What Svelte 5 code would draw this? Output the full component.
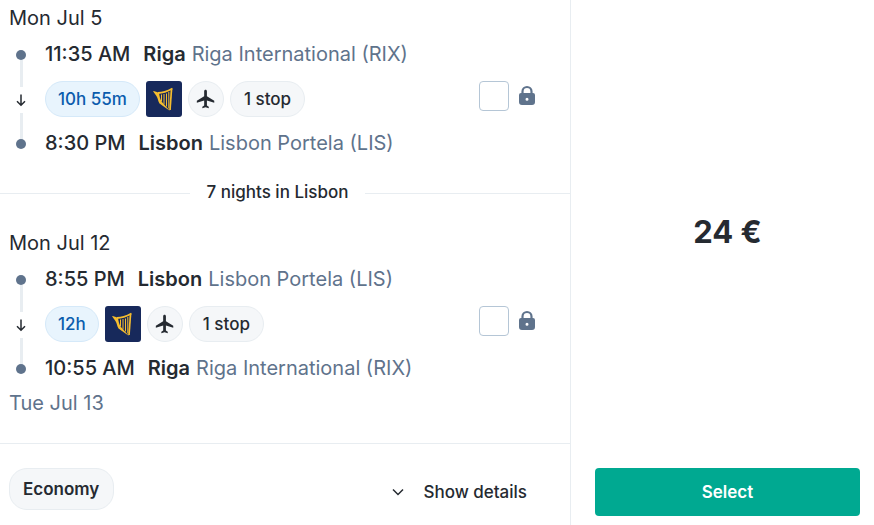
<script>
  const legs = [
    {
      date: "Mon Jul 5",
      dep: { time: "11:35 AM", city: "Riga", airport: "Riga International (RIX)" },
      dur: "10h 55m",
      arr: { time: "8:30 PM", city: "Lisbon", airport: "Lisbon Portela (LIS)" },
      endDate: null
    },
    {
      date: "Mon Jul 12",
      dep: { time: "8:55 PM", city: "Lisbon", airport: "Lisbon Portela (LIS)" },
      dur: "12h",
      arr: { time: "10:55 AM", city: "Riga", airport: "Riga International (RIX)" },
      endDate: "Tue Jul 13"
    }
  ];
</script>

{#snippet stop(s)}
  <div class="stop">
    <span class="time">{s.time}</span>
    <span class="city">{s.city}</span>
    <span class="airport">{s.airport}</span>
  </div>
{/snippet}

<div class="card">
  <div class="left">
    <div class="legs">
      {#each legs as leg, i}
        {#if i > 0}
          <div class="nights"><span>7 nights in Lisbon</span></div>
        {/if}
        <section class="leg">
          <div class="date">{leg.date}</div>
          <div class="route">
            <div class="rail">
              <i class="dot"></i>
              <i class="line"></i>
              <svg class="arrow" viewBox="0 0 12 14" width="12" height="14">
                <path d="M6 1.500v10.500M2 8.200 6 12.200l4-4" fill="none" stroke="#252a31" stroke-width="1.500" />
              </svg>
              <i class="line"></i>
              <i class="dot"></i>
            </div>
            <div class="body">
              {@render stop(leg.dep)}
              <div class="meta">
                <div class="badges">
                  <span class="pill blue">{leg.dur}</span>
                  <span class="logo">
                    <svg viewBox="0 0 36 36" width="36" height="36">
                      <path fill="#f5bd2e" d="M7 10C9 10 11 11 13 12C13.500 15 14 18 15.500 20.500L24 30L13.500 22.500C12 20 12 18 11 16C10 14 8 12 7 10z" />
                      <g fill="none" stroke="#f5bd2e">
                        <path d="M12 12C17 12 22 10 26.500 7.500" stroke-width="2" />
                        <path d="M25.500 8.500 24 29" stroke-width="1.700" />
                        <path d="M15.500 13.500V20.500M18 13V23.500M20.500 12.500V25.500M22.800 11V27.500" stroke-width="1" />
                      </g>
                    </svg>
                  </span>
                  <span class="pill round">
                    <svg viewBox="0 0 24 24" width="22" height="22">
                      <path fill="#252a31" d="M21 16v-2l-8-5V3.500c0-.83-.67-1.500-1.500-1.500S10 2.670 10 3.500V9l-8 5v2l8-2.500V19l-2 1.500V22l3.500-1 3.500 1v-1.500L13 19v-5.500l8 2.500z" />
                    </svg>
                  </span>
                  <span class="pill">1 stop</span>
                </div>
                <div class="fare">
                  <span class="check"></span>
                  <svg class="lock" viewBox="0 0 18 20" width="18" height="20">
                    <path d="M4.500 9V6.500a4.500 4.500 0 0 1 9 0V9" fill="none" stroke="#5f738c" stroke-width="2.200" />
                    <path fill="#5f738c" fill-rule="evenodd" d="M3 8h12a2 2 0 0 1 2 2v7a3 3 0 0 1-3 3H4a3 3 0 0 1-3-3v-7a2 2 0 0 1 2-2zm6 4.700a1.500 1.500 0 1 0 0 3 1.500 1.500 0 0 0 0-3z" />
                  </svg>
                </div>
              </div>
              {@render stop(leg.arr)}
            </div>
          </div>
          {#if leg.endDate}
            <div class="date end">{leg.endDate}</div>
          {/if}
        </section>
      {/each}
    </div>
    <footer class="foot">
      <span class="cabin">Economy</span>
      <button class="details">
        <svg viewBox="0 0 12 8" width="12" height="8">
          <path d="M1 1.500 6 6.500l5-5" fill="none" stroke="#252a31" stroke-width="1.500" />
        </svg>
        Show details
      </button>
    </footer>
  </div>
  <aside class="right">
    <div class="price">24 €</div>
    <button class="select">Select</button>
  </aside>
</div>

<style>
  :global(body) {
    margin: 0;
    background: #fff;
  }

  .card {
    display: flex;
    width: 874px;
    height: 525px;
    overflow: hidden;
    font-family: Inter, "Liberation Sans", sans-serif;
    color: #252a31;
  }

  .left {
    width: 570px;
    border-right: 1px solid #e8edf1;
    display: flex;
    flex-direction: column;
  }

  .legs {
    height: 443px;
    border-bottom: 1px solid #e8edf1;
  }

  .leg {
    padding: 6px 0 0 9px;
  }

  .date {
    font-size: 20px;
    line-height: 24px;
    color: #252a31;
  }

  .date.end {
    color: #5f738c;
    margin-top: 10px;
  }

  .route {
    display: flex;
    margin-top: 11px;
    height: 115px;
  }

  .rail {
    width: 24px;
    flex: none;
    display: flex;
    flex-direction: column;
    align-items: center;
    padding: 9px 0 7px;
    box-sizing: border-box;
  }

  .dot {
    width: 10px;
    height: 10px;
    border-radius: 50%;
    background: #5f738c;
    flex: none;
  }

  .line {
    width: 3px;
    flex: 1;
    background: #e8edf1;
  }

  .arrow {
    margin: 6px 0;
    flex: none;
  }

  .body {
    flex: 1;
    margin-left: 12px;
    display: flex;
    flex-direction: column;
    justify-content: space-between;
  }

  .stop {
    display: flex;
    align-items: baseline;
    height: 26px;
    line-height: 26px;
    font-size: 20px;
  }

  .time {
    font-weight: 500;
    margin-right: 13px;
  }

  .city {
    font-weight: 600;
    margin-right: 6px;
  }

  .airport {
    color: #5f738c;
  }

  .meta {
    display: flex;
    align-items: center;
    justify-content: space-between;
    padding-right: 34px;
  }

  .badges {
    display: flex;
    gap: 6px;
  }

  .pill {
    height: 36px;
    box-sizing: border-box;
    padding: 0 13px;
    border: 1px solid #e8edf1;
    border-radius: 18px;
    background: #f5f7f9;
    display: flex;
    align-items: center;
    font-size: 17px;
    font-weight: 500;
  }

  .pill.blue {
    padding: 0 12px;
    background: #e8f4fd;
    border-color: #d5e9f9;
    color: #0b5cad;
  }

  .pill.round {
    width: 36px;
    padding: 0;
    justify-content: center;
  }

  .logo {
    width: 36px;
    height: 36px;
    border-radius: 3px;
    background: #17295b;
    display: block;
  }

  .logo svg {
    display: block;
  }

  .fare {
    display: flex;
    align-items: center;
    gap: 9px;
    margin-top: -5px;
  }

  .lock {
    margin-bottom: 2px;
  }

  .check {
    width: 30px;
    height: 30px;
    box-sizing: border-box;
    border: 1px solid #b5c6d6;
    border-radius: 4px;
    background: #fff;
  }

  .nights {
    height: 1px;
    background: #e8edf1;
    margin-top: 37px;
    margin-bottom: 31px;
    display: flex;
    align-items: center;
    justify-content: center;
  }

  .nights span {
    background: #fff;
    padding: 0 17px;
    margin: 0 15px 3px 0;
    font-size: 17px;
    font-weight: 500;
  }

  .foot {
    flex: 1;
    display: flex;
    align-items: flex-start;
    justify-content: space-between;
    padding: 24px 43px 0 9px;
  }

  .cabin {
    height: 42px;
    box-sizing: border-box;
    padding: 0 14px 0 13px;
    border: 1px solid #e8edf1;
    border-radius: 18px;
    background: #f5f7f9;
    display: flex;
    align-items: center;
    font-size: 17px;
    font-weight: 600;
  }

  .details {
    margin-top: 3px;
    height: 42px;
    padding: 0;
    border: 0;
    background: none;
    display: flex;
    align-items: center;
    gap: 19px;
    font: inherit;
    font-size: 17px;
    font-weight: 500;
    color: #252a31;
  }

  .right {
    flex: 1;
    display: flex;
    flex-direction: column;
    align-items: center;
    padding: 0 14px 9px 24px;
  }

  .price {
    margin-top: 212px;
    font-size: 31px;
    line-height: 40px;
    font-weight: 700;
  }

  .select {
    margin-top: auto;
    width: 100%;
    height: 48px;
    border: 0;
    border-radius: 4px;
    background: #00a991;
    color: #fff;
    font: inherit;
    font-size: 17px;
    font-weight: 600;
  }
</style>
